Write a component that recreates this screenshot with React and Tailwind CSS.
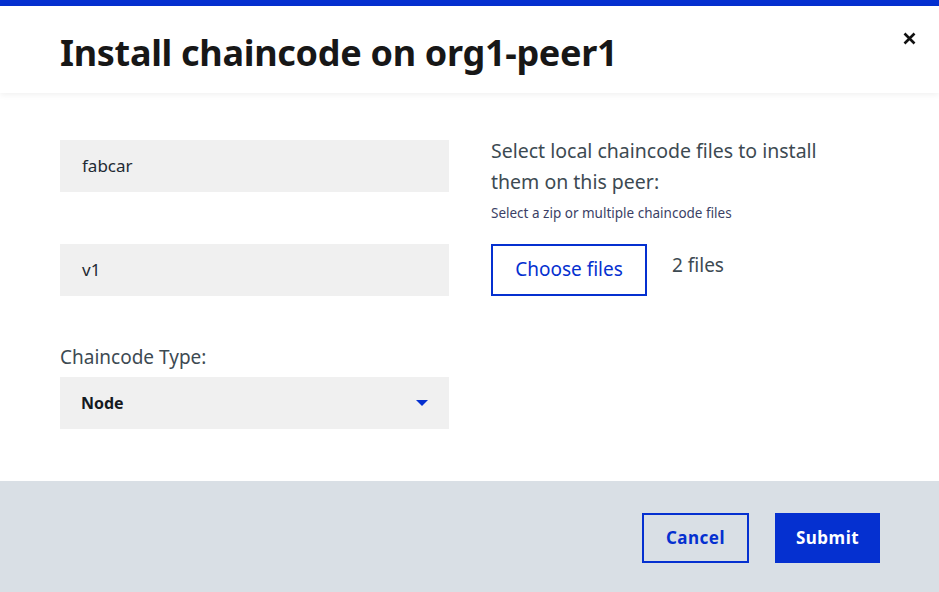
export default function App() {
  const font = { fontFamily: '"Noto Sans", "Open Sans", sans-serif' };
  return (
    <div className="w-[939px] h-[592px] bg-white flex flex-col overflow-hidden text-[#1f2933]" style={font}>
      <div className="h-[6px] bg-[#0530d0]" />
      <div className="relative h-[87px] flex items-center pl-[60px] shadow-[0_2px_6px_rgba(0,0,0,0.06)]">
        <h1 className="text-[36px] font-bold tracking-[-0.3px] text-[#171717] leading-none pt-[6px]">Install chaincode on org1-peer1</h1>
        <button className="absolute right-[22px] top-[24px] w-[16px] h-[16px] flex items-center justify-center">
          <svg width="13" height="13" viewBox="0 0 13 13">
            <path d="M1.5 1.5 L11.5 11.5 M11.5 1.5 L1.5 11.5" stroke="#111" strokeWidth="2.6" />
          </svg>
        </button>
      </div>
      <div className="flex-1 flex pl-[60px] pt-[47px]">
        <div className="w-[389px] flex flex-col">
          <div className="h-[52px] bg-[#f0f0f0] flex items-center pl-[22px] text-[17px] text-[#1f2a33]">fabcar</div>
          <div className="h-[52px] bg-[#f0f0f0] flex items-center pl-[22px] text-[17px] text-[#1f2a33] mt-[52px]">v1</div>
          <div className="mt-[48px] text-[19px] text-[#3d4a52] leading-[26px]">Chaincode Type:</div>
          <div className="mt-[7px] h-[52px] bg-[#f0f0f0] flex items-center justify-between pl-[21px] pr-[21px]">
            <span className="text-[16px] font-bold text-[#151a1f]">Node</span>
            <svg width="12" height="6" viewBox="0 0 12 6"><path d="M0 0 H12 L6 6 Z" fill="#0530d0" /></svg>
          </div>
        </div>
        <div className="ml-[42px] flex flex-col">
          <div className="text-[19.5px] leading-[31px] text-[#3d4a52] w-[350px] -mt-[5px]">Select local chaincode files to install them on this peer:</div>
          <div className="text-[13.5px] text-[#3b3f66] mt-[7px] leading-[18px]">Select a zip or multiple chaincode files</div>
          <div className="flex items-start mt-[22px]">
            <button className="w-[156px] h-[52px] border-2 border-[#0530d0] text-[#0530d0] text-[19px] flex items-center justify-center pb-[1px]">Choose files</button>
            <span className="ml-[25px] text-[19px] text-[#3d4a52] mt-[7px]">2 files</span>
          </div>
        </div>
      </div>
      <div className="h-[111px] bg-[#d9dfe5] flex items-start justify-end pr-[59px] pt-[32px] gap-[26px]">
        <button className="w-[107px] h-[50px] border-2 border-[#0530d0] text-[#0530d0] text-[17px] font-bold tracking-[0.5px]">Cancel</button>
        <button className="w-[105px] h-[50px] bg-[#0530d0] text-white text-[17px] font-bold tracking-[0.5px]">Submit</button>
      </div>
    </div>
  );
}
